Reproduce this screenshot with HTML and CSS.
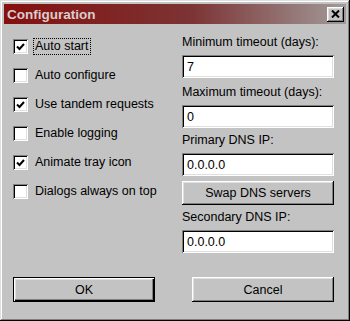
FILE: index.html
```html
<!DOCTYPE html>
<html>
<head>
  <title>Configuration</title>
  <link rel="stylesheet" href="styles.css">
</head>
<body>
  <div class="window">
    <div class="titlebar">
      <span class="title">Configuration</span>
      <button class="close-btn" aria-label="Close">
        <svg width="9" height="8" viewBox="0 0 9 8"><path d="M1 0.5 L8 7.5 M8 0.5 L1 7.5" stroke="#000" stroke-width="2" fill="none"/></svg>
      </button>
    </div>

    <div class="body">
      <div class="columns">
        <div class="options">
          <label class="option">
            <span class="check"><svg width="9" height="8" viewBox="0 0 9 8"><path d="M1 3.5 L3.5 6 L8 1" stroke="#000" stroke-width="2" fill="none"/></svg></span>
            <span class="option-text focused">Auto start</span>
          </label>
          <label class="option">
            <span class="check"></span>
            <span class="option-text">Auto configure</span>
          </label>
          <label class="option">
            <span class="check"><svg width="9" height="8" viewBox="0 0 9 8"><path d="M1 3.5 L3.5 6 L8 1" stroke="#000" stroke-width="2" fill="none"/></svg></span>
            <span class="option-text">Use tandem requests</span>
          </label>
          <label class="option">
            <span class="check"></span>
            <span class="option-text">Enable logging</span>
          </label>
          <label class="option">
            <span class="check"><svg width="9" height="8" viewBox="0 0 9 8"><path d="M1 3.5 L3.5 6 L8 1" stroke="#000" stroke-width="2" fill="none"/></svg></span>
            <span class="option-text">Animate tray icon</span>
          </label>
          <label class="option">
            <span class="check"></span>
            <span class="option-text">Dialogs always on top</span>
          </label>
        </div>

        <div class="settings">
          <div class="field">
            <div class="field-label">Minimum timeout (days):</div>
            <div class="textbox">7</div>
          </div>
          <div class="field">
            <div class="field-label">Maximum timeout (days):</div>
            <div class="textbox">0</div>
          </div>
          <div class="field">
            <div class="field-label">Primary DNS IP:</div>
            <div class="textbox">0.0.0.0</div>
          </div>
          <button class="btn swap-btn">Swap DNS servers</button>
          <div class="field">
            <div class="field-label">Secondary DNS IP:</div>
            <div class="textbox">0.0.0.0</div>
          </div>
        </div>
      </div>

      <div class="actions">
        <button class="btn default">OK</button>
        <button class="btn">Cancel</button>
      </div>
    </div>
  </div>
</body>
</html>
```

FILE: styles.css
```css
body {
  margin: 0;
  padding: 0;
}

.window {
  width: 350px;
  height: 321px;
  box-sizing: border-box;
  padding: 4px;
  background-color: #c3c3c3;
  box-shadow: inset -1px -1px #000, inset 1px 1px #dfdfdf, inset -2px -2px #808080, inset 2px 2px #fff;
  font-family: "Liberation Sans", Arial, sans-serif;
  font-size: 12.5px;
  color: #000;
  display: flex;
  flex-direction: column;
}

.titlebar {
  height: 20px;
  display: flex;
  align-items: center;
  justify-content: space-between;
  padding: 0 2px 0 3px;
  background: linear-gradient(90deg, #84100f, #7c3434 55%, #a29a9a);
}

.title {
  color: #dccccc;
  font-weight: bold;
  font-size: 13.5px;
}

.close-btn {
  width: 17px;
  height: 15px;
  padding: 0;
  border: 0;
  background-color: #c3c3c3;
  box-shadow: inset -1px -1px #000, inset 1px 1px #fff, inset -2px -2px #808080, inset 2px 2px #dfdfdf;
  display: flex;
  align-items: center;
  justify-content: center;
}

.body {
  flex: 1;
  padding: 8px 12px 0 9px;
  display: flex;
  flex-direction: column;
}

.columns {
  display: grid;
  grid-template-columns: 1fr 152px;
}

.options {
  display: flex;
  flex-direction: column;
}

.option {
  display: flex;
  align-items: center;
  gap: 5px;
  height: 29px;
}

.check {
  width: 15px;
  height: 15px;
  box-sizing: border-box;
  background-color: #fff;
  box-shadow: inset 1px 1px #808080, inset -1px -1px #fff, inset 2px 2px #000, inset -2px -2px #dfdfdf;
  display: flex;
  align-items: center;
  justify-content: center;
}

.option-text {
  line-height: 15px;
  padding: 0 1px;
  border: 1px dotted transparent;
}

.option-text.focused {
  border-color: #000;
}

.settings {
  display: flex;
  flex-direction: column;
  gap: 5px;
  padding-top: 3px;
}

.field:first-child {
  margin-bottom: 2px;
}

.field-label {
  line-height: 15px;
  margin-bottom: 5px;
}

.textbox {
  height: 23px;
  box-sizing: border-box;
  padding: 0 5px;
  display: flex;
  align-items: center;
  background-color: #fff;
  box-shadow: inset 1px 1px #808080, inset -1px -1px #fff, inset 2px 2px #000, inset -2px -2px #dfdfdf;
}

.btn {
  border: 0;
  padding: 0;
  background-color: #c3c3c3;
  font-family: inherit;
  font-size: inherit;
  color: #000;
  box-shadow: inset -1px -1px #000, inset 1px 1px #fff, inset -2px -2px #808080, inset 2px 2px #dfdfdf;
}

.swap-btn {
  height: 24px;
  width: 100%;
}

.btn.default {
  box-shadow: inset 0 0 0 1px #000, inset 2px 2px #fff, inset -2px -2px #000, inset -3px -3px #808080, inset 3px 3px #dfdfdf;
}

.actions {
  display: flex;
  justify-content: space-between;
  margin-top: 24px;
}

.actions .btn {
  width: 142px;
  height: 25px;
}
```
